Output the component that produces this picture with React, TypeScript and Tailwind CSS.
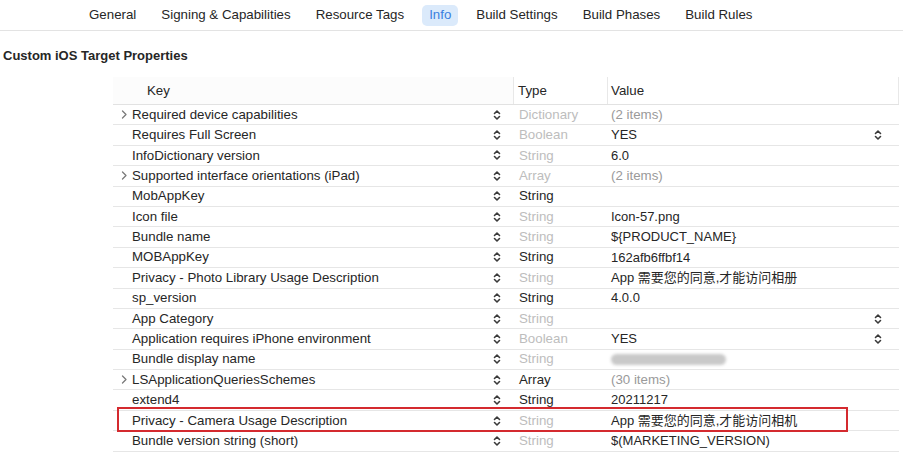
import React from "react";

type Row = {
  key: string;
  expand?: boolean;
  type: string;
  typeDim: boolean;
  value?: string;
  valueDim?: boolean;
  popup?: boolean;
  blur?: boolean;
};

const rows: Row[] = [
  { key: "Required device capabilities", expand: true, type: "Dictionary", typeDim: true, value: "(2 items)", valueDim: true },
  { key: "Requires Full Screen", type: "Boolean", typeDim: true, value: "YES", popup: true },
  { key: "InfoDictionary version", type: "String", typeDim: true, value: "6.0" },
  { key: "Supported interface orientations (iPad)", expand: true, type: "Array", typeDim: true, value: "(2 items)", valueDim: true },
  { key: "MobAppKey", type: "String", typeDim: false },
  { key: "Icon file", type: "String", typeDim: true, value: "Icon-57.png" },
  { key: "Bundle name", type: "String", typeDim: true, value: "${PRODUCT_NAME}" },
  { key: "MOBAppKey", type: "String", typeDim: false, value: "162afb6ffbf14" },
  { key: "Privacy - Photo Library Usage Description", type: "String", typeDim: true, value: "App 需要您的同意,才能访问相册" },
  { key: "sp_version", type: "String", typeDim: false, value: "4.0.0" },
  { key: "App Category", type: "String", typeDim: true, popup: true },
  { key: "Application requires iPhone environment", type: "Boolean", typeDim: true, value: "YES", popup: true },
  { key: "Bundle display name", type: "String", typeDim: true, blur: true },
  { key: "LSApplicationQueriesSchemes", expand: true, type: "Array", typeDim: false, value: "(30 items)", valueDim: true },
  { key: "extend4", type: "String", typeDim: false, value: "20211217" },
  { key: "Privacy - Camera Usage Description", type: "String", typeDim: true, value: "App 需要您的同意,才能访问相机" },
  { key: "Bundle version string (short)", type: "String", typeDim: true, value: "$(MARKETING_VERSION)" },
];

const tabs = ["General", "Signing & Capabilities", "Resource Tags", "Info", "Build Settings", "Build Phases", "Build Rules"];

function Stepper() {
  return (
    <svg width="8" height="12" viewBox="0 0 8 12" fill="none" stroke="#3a3a3a" strokeWidth="1.6" strokeLinecap="round" strokeLinejoin="round">
      <path d="M1.5 4.5 L4 2 L6.5 4.5" />
      <path d="M1.5 7.5 L4 10 L6.5 7.5" />
    </svg>
  );
}

function Chevron() {
  return (
    <svg width="6" height="9" viewBox="0 0 6 9" fill="none" stroke="#7a7a7a" strokeWidth="1.3" strokeLinecap="round" strokeLinejoin="round">
      <path d="M1.5 1 L5 4.5 L1.5 8" />
    </svg>
  );
}

export default function App() {
  return (
    <div className="w-[903px] h-[455px] bg-white overflow-hidden text-[#262626]" style={{ fontFamily: '"Liberation Sans", "Noto Sans CJK SC", sans-serif' }}>
      {/* tab bar */}
      <div className="h-[31px] border-b border-[#e3e3e3] flex items-center pl-[82px] gap-[11px] text-[13.3px]">
        {tabs.map(t => (
          <div key={t} className={t === "Info" ? "px-[7px] h-[21px] flex items-center rounded-[5px] bg-[#dbeafb] text-[#3a7fe0]" : "px-[7px] h-[21px] flex items-center"}>
            {t}
          </div>
        ))}
      </div>

      <div className="pl-[3px] pt-[15px] h-[46px] text-[13px] font-bold">Custom iOS Target Properties</div>

      {/* table */}
      <div className="relative ml-[113px] w-[786px] text-[13.3px]">
        <div className="flex h-[28px] items-center border-b border-[#e2e2e2]">
          <div className="w-[400px] pl-[34px] h-full flex items-center bg-[#fcfcfc]">Key</div>
          <div className="w-[94px] pl-[4px] h-full flex items-center border-l border-[#e8e8e8]">Type</div>
          <div className="flex-1 pl-[3px] h-full flex items-center border-l border-[#e8e8e8] border-r">Value</div>
        </div>
        {rows.map(r => (
          <div key={r.key} className="flex h-[20.4px] items-center border-b border-[#e6e6e6]">
            <div className="w-[400px] flex items-center">
              <div className="w-[19px] flex justify-center pl-[3px]">{r.expand && <Chevron />}</div>
              <div className="flex-1 whitespace-nowrap">{r.key}</div>
              <div className="w-[32px] flex justify-center"><Stepper /></div>
            </div>
            <div className={r.typeDim ? "w-[94px] pl-[6px] text-[#bdbdbd]" : "w-[94px] pl-[6px]"}>{r.type}</div>
            <div className="flex-1 flex items-center pl-[4px] pr-[17px]">
              <div className={r.valueDim ? "flex-1 text-[#9a9a9a] whitespace-nowrap" : "flex-1 whitespace-nowrap text-[13px]"}>
                {r.value}
                {r.blur && <div className="w-[115px] h-[11px] rounded-full bg-[#c9c9c9] blur-[1.5px]" />}
              </div>
              {r.popup && <Stepper />}
            </div>
          </div>
        ))}
        <div className="absolute left-[4px] top-[330px] w-[731px] h-[25px] border-2 border-[#d42a2f]" />
      </div>
    </div>
  );
}
